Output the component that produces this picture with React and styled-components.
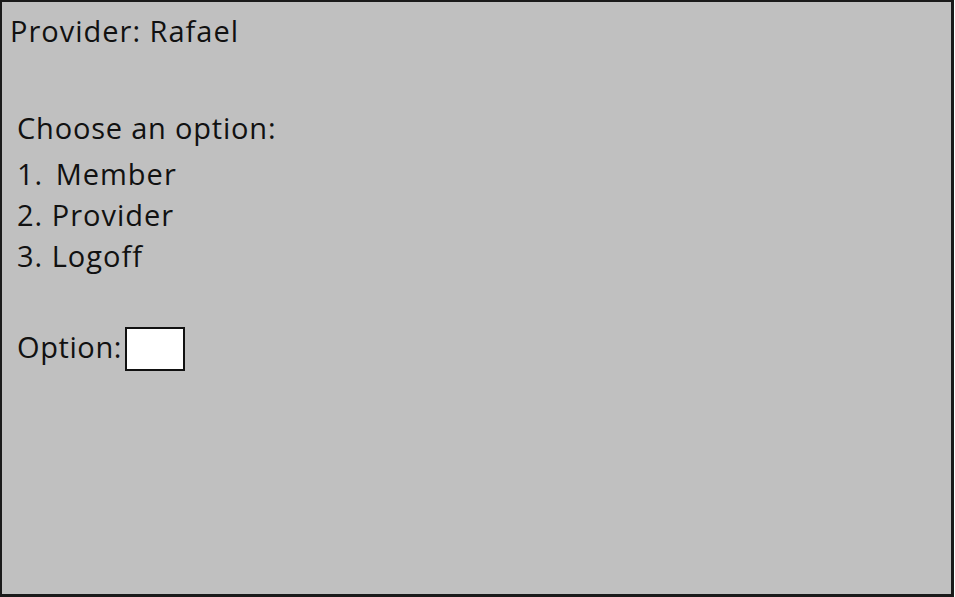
import React from "react";
import styled, { createGlobalStyle } from "styled-components";

const GlobalStyle = createGlobalStyle`
  html, body {
    margin: 0;
    padding: 0;
    background: #ffffff;
  }
  body {
    font-family: "Open Sans", "DejaVu Sans", sans-serif;
    color: #111;
  }
`;

const Screen = styled.div`
  box-sizing: border-box;
  width: 954px;
  height: 597px;
  background: #c0c0c0;
  border: 2px solid #1a1a1a;
  border-right-width: 3px;
  border-bottom-width: 3px;
  padding: 11px 0 0 8px;
`;

const Title = styled.div`
  font-size: 29px;
  line-height: 36px;
  letter-spacing: 1px;
`;

const Menu = styled.div`
  display: flex;
  flex-direction: column;
  padding: 61px 0 0 7px;
`;

const Label = styled.div`
  font-size: 29px;
  line-height: 36px;
  letter-spacing: ${({ tight }) => (tight ? 0.8 : 1)}px;
  white-space: pre;
  margin-bottom: ${({ gap }) => gap ?? 5}px;
`;

const OptionRow = styled.div`
  display: flex;
  align-items: center;
  gap: 3px;
  margin-top: 44px;
  font-size: 29px;
  line-height: 36px;
  letter-spacing: 0.6px;
`;

const Field = styled.div`
  box-sizing: border-box;
  width: 60px;
  height: 44px;
  margin-top: 4px;
  background: #fff;
  border: 2px solid #111;
`;

const items = ["1.\u200A Member", "2. Provider", "3. Logoff"];

export default function App() {
  return (
    <>
      <GlobalStyle />
      <Screen>
        <Title>Provider: Rafael</Title>
        <Menu>
          <Label gap={10} tight>
            Choose an option:
          </Label>
          {items.map((item) => (
            <Label key={item}>{item}</Label>
          ))}
          <OptionRow>
            <span>Option:</span>
            <Field />
          </OptionRow>
        </Menu>
      </Screen>
    </>
  );
}
